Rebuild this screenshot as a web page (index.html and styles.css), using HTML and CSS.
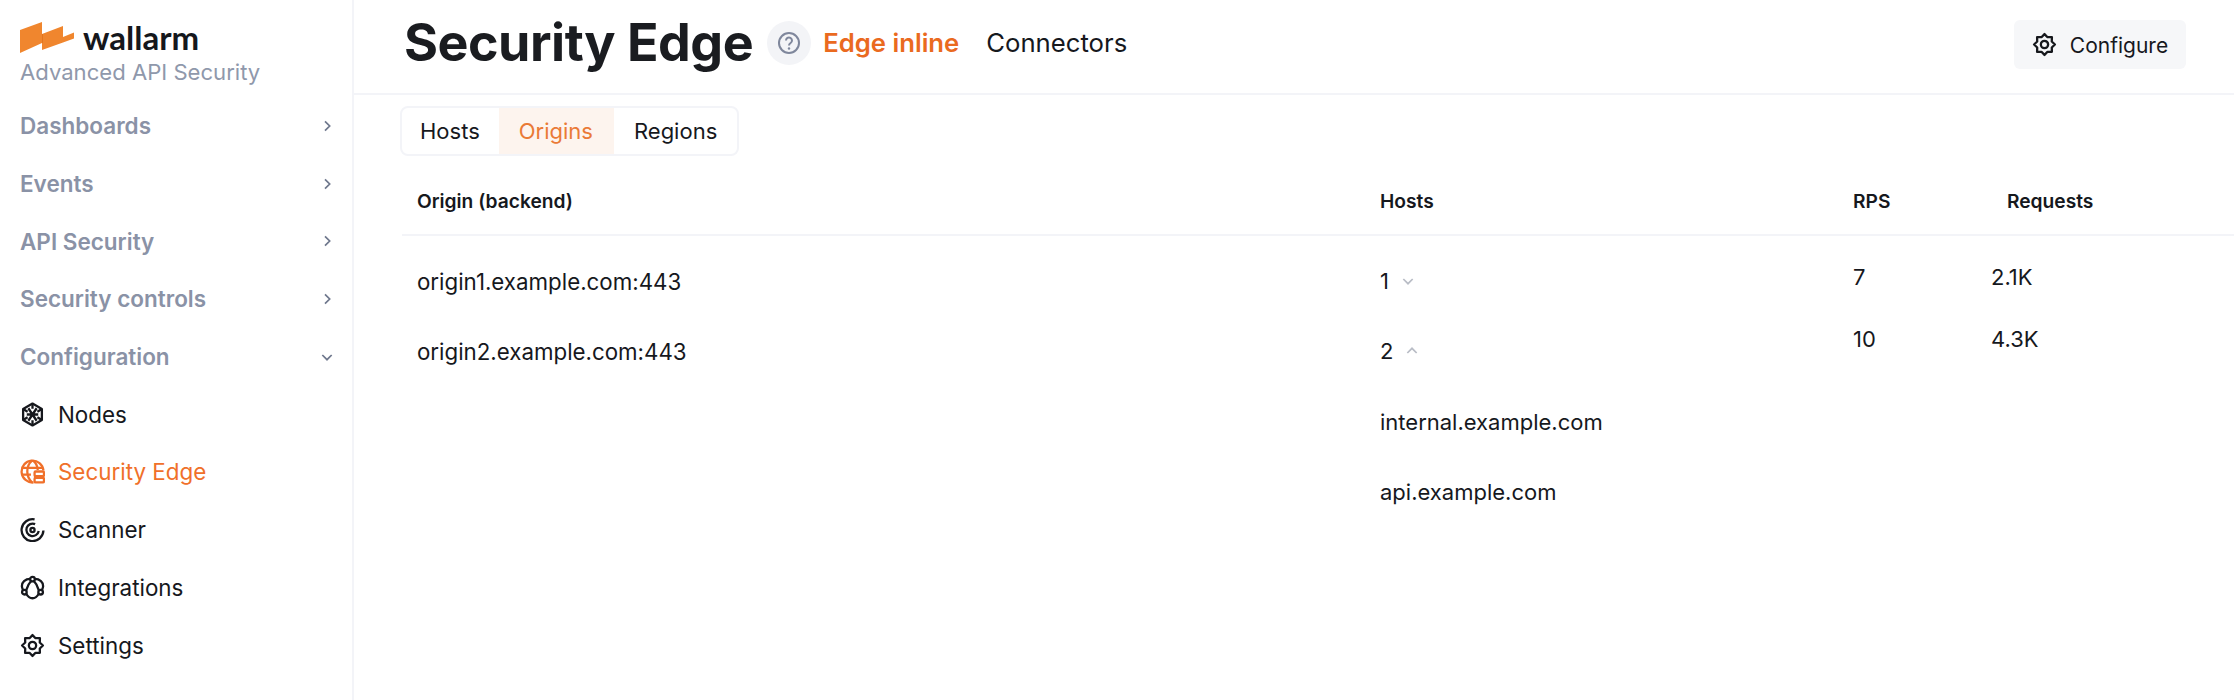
FILE: index.html
```html
<!DOCTYPE html>
<html lang="en">
<head>
<title>Security Edge</title>
<link rel="stylesheet" href="styles.css">
</head>
<body>

<aside class="sidebar">
  <div class="logo">
    <svg class="logo-mark" width="56" height="32" viewBox="0 0 56 32">
      <polygon fill="#f0862e" points="0,9 22,1 22,13 43,5 43,16 54,11.500 54,17.500 43,21.500 22,29 22,22 0,32"/>
      <polygon fill="#e2761f" points="22,13 22,22 23,22 23,13"/>
    </svg>
    <span class="logo-name">wallarm</span>
  </div>
  <div class="logo-sub">Advanced API Security</div>

  <nav class="nav">
    <div class="nav-group">Dashboards
      <svg class="nav-chevron" viewBox="0 0 12 12"><path d="M4.500 2.500 8 6l-3.500 3.500"/></svg>
    </div>
    <div class="nav-group">Events
      <svg class="nav-chevron" viewBox="0 0 12 12"><path d="M4.500 2.500 8 6l-3.500 3.500"/></svg>
    </div>
    <div class="nav-group">API Security
      <svg class="nav-chevron" viewBox="0 0 12 12"><path d="M4.500 2.500 8 6l-3.500 3.500"/></svg>
    </div>
    <div class="nav-group">Security controls
      <svg class="nav-chevron" viewBox="0 0 12 12"><path d="M4.500 2.500 8 6l-3.500 3.500"/></svg>
    </div>
    <div class="nav-group">Configuration
      <svg class="nav-chevron" viewBox="0 0 12 12"><path d="M2.500 4.500 6 8l3.500-3.500"/></svg>
    </div>

    <div class="nav-item">
      <svg class="nav-icon" viewBox="0 0 24 24">
        <path d="M12 1.500 21 6.700v10.600l-9 5.200-9-5.200V6.700z"/>
        <path d="M12 6.500V1.500M12 17.500v5M7.300 9.300 3 6.700M16.700 9.300 21 6.700M7.300 14.700 3 17.300M16.700 14.700 21 17.300"/>
        <path d="M12 12 8 6M12 12l4-6M12 12H6.500M12 12h5.500M12 12l-4 6M12 12l4 6"/>
      </svg>
      Nodes
    </div>
    <div class="nav-item active">
      <svg class="nav-icon" viewBox="0 0 24 24">
        <path d="M13 22.500A10.500 10.500 0 1 1 22.500 11"/>
        <path d="M1.500 8.500h20M1.500 15h9M11.500 1.500C8 4.500 7 8 7 12c0 4 1.500 7.500 4.500 10.500M12.500 1.500c3 2.500 4.500 5.500 4.500 9"/>
        <rect x="14" y="12" width="9" height="4.500" rx="1"/>
        <rect x="14" y="18" width="9" height="4.500" rx="1"/>
      </svg>
      Security Edge
    </div>
    <div class="nav-item">
      <svg class="nav-icon" viewBox="0 0 24 24">
        <path d="M14 2.300A10.500 10.500 0 1 0 22.500 13"/>
        <path d="M14.500 6.800A6 6 0 1 0 18 13.500"/>
        <circle cx="12" cy="12.500" r="2"/>
      </svg>
      Scanner
    </div>
    <div class="nav-item">
      <svg class="nav-icon" viewBox="0 0 24 24">
        <circle cx="12" cy="4" r="2.200"/>
        <circle cx="4.200" cy="16.500" r="2.200"/>
        <circle cx="19.800" cy="16.500" r="2.200"/>
        <path d="M9.800 3.800C5 3.800 1.500 7 1.800 10.800c.1 1 .4 2 1 3.300M14.200 3.800C19 3.800 22.500 7 22.200 10.800c-.1 1-.4 2-1 3.300M6 18c1.500 2.800 3.700 4.300 6 4.300s4.500-1.500 6-4.300"/>
        <path d="M10.700 5.800C8.500 8 7 11 6 14.500M13.300 5.800C15.500 8 17 11 18 14.500"/>
      </svg>
      Integrations
    </div>
    <div class="nav-item">
      <svg class="nav-icon" viewBox="0 0 24 24">
        <polygon points="22,12 19,14.900 19.100,19.100 14.900,19 12,22 9.100,19 4.900,19.100 5,14.900 2,12 5,9.100 4.900,4.900 9.100,5 12,2 14.900,5 19.100,4.900 19,9.100"/>
        <circle cx="12" cy="12" r="3.500"/>
      </svg>
      Settings
    </div>
  </nav>
</aside>

<main class="main">
  <header class="topbar">
    <h1 class="title">Security Edge</h1>
    <button class="help-btn">
      <svg width="24" height="24" viewBox="0 0 24 24">
        <circle cx="12" cy="12" r="10" fill="none" stroke="#7f879c" stroke-width="2"/>
        <path d="M9 9.500a3 3 0 1 1 4.600 2.500c-1 .7-1.600 1.200-1.600 2.500" fill="none" stroke="#7f879c" stroke-width="2"/>
        <circle cx="12" cy="17.500" r="1.200" fill="#7f879c"/>
      </svg>
    </button>
    <a class="top-link active">Edge inline</a>
    <a class="top-link">Connectors</a>
    <button class="config-btn">
      <svg class="nav-icon" viewBox="0 0 24 24">
        <polygon points="22,12 19,14.900 19.100,19.100 14.900,19 12,22 9.100,19 4.900,19.100 5,14.900 2,12 5,9.100 4.900,4.900 9.100,5 12,2 14.900,5 19.100,4.900 19,9.100"/>
        <circle cx="12" cy="12" r="3.500"/>
      </svg>
      <span class="config-label">Configure</span>
    </button>
  </header>

  <div class="tabs">
    <div class="tab">Hosts</div>
    <div class="tab active">Origins</div>
    <div class="tab">Regions</div>
  </div>

  <div class="table-head">
    <div class="th">Origin (backend)</div>
    <div class="th">Hosts</div>
    <div class="th">RPS</div>
    <div class="th th-requests">Requests</div>
  </div>

  <div class="table-body">
    <div class="col col-origin">
      <div class="cell">origin1.example.com:443</div>
      <div class="cell">origin2.example.com:443</div>
    </div>
    <div class="col">
      <div class="cell">1
        <svg class="row-chevron" viewBox="0 0 12 12"><path d="M2.500 4.500 6 8l3.500-3.500"/></svg>
      </div>
      <div class="cell">2
        <svg class="row-chevron" viewBox="0 0 12 12"><path d="M2.500 7.500 6 4l3.500 3.500"/></svg>
      </div>
      <div class="cell">internal.example.com</div>
      <div class="cell">api.example.com</div>
    </div>
    <div class="col">
      <div class="cell-num">7</div>
      <div class="cell-num">10</div>
    </div>
    <div class="col">
      <div class="cell-num">2.1K</div>
      <div class="cell-num">4.3K</div>
    </div>
  </div>
</main>

</body>
</html>
```

FILE: styles.css
```css
* {
  box-sizing: border-box;
}
body {
  margin: 0;
  height: 700px;
  overflow: hidden;
  display: flex;
  background-color: #ffffff;
  color: #16181d;
  font-family: Inter, "Liberation Sans", sans-serif;
  font-size: 22px;
}

/* sidebar */
.sidebar {
  width: 354px;
  flex-shrink: 0;
  padding: 21px 0 0 20px;
  border-right: 2px solid #f3f4f8;
}
.logo {
  display: flex;
  align-items: center;
  gap: 7px;
  height: 32px;
}
.logo-name {
  font-family: Lato, Inter, sans-serif;
  font-size: 33px;
  font-weight: 700;
  color: #15171c;
  line-height: 32px;
}
.logo-sub {
  margin-top: 3px;
  font-size: 22.100px;
  line-height: 32px;
  color: #8f98ab;
}
.nav {
  margin-top: 9px;
}
.nav-group,
.nav-item {
  height: 57.700px;
  display: flex;
  align-items: center;
}
.nav-group {
  justify-content: space-between;
  padding-right: 17px;
  font-size: 22.500px;
  font-weight: 600;
  color: #8a92a6;
}
.nav-chevron {
  width: 16px;
  height: 16px;
  fill: none;
  stroke: #6f788d;
  stroke-width: 1.300;
}
.nav-item {
  gap: 13px;
  font-size: 22.400px;
}
.nav-item.active {
  color: #f0702a;
}
.nav-icon {
  width: 25px;
  height: 25px;
  flex-shrink: 0;
  fill: none;
  stroke: currentColor;
  stroke-width: 2.200;
  stroke-linejoin: round;
}

/* header */
.main {
  flex: 1;
  min-width: 0;
}
.topbar {
  height: 95px;
  display: flex;
  align-items: center;
  padding: 0 48px 8px 50px;
  border-bottom: 2px solid #f3f4f8;
}
.title {
  margin: 0;
  font-size: 52px;
  font-weight: 700;
  color: #1a1c20;
  letter-spacing: -0.5px;
}
.help-btn {
  width: 44px;
  height: 44px;
  margin-left: 14px;
  display: flex;
  align-items: center;
  justify-content: center;
  padding: 0;
  border: none;
  border-radius: 50%;
  background-color: #f3f4f7;
}
.top-link {
  font-size: 25.700px;
  margin-right: 27px;
}
.help-btn + .top-link {
  margin-left: 12px;
}
.top-link.active {
  font-weight: 600;
  color: #ea6a1f;
}
.config-btn {
  margin: 3px 0 0 auto;
  height: 49px;
  width: 172px;
  display: flex;
  align-items: center;
  justify-content: center;
  gap: 13px;
  border: none;
  border-radius: 6px;
  background-color: #f6f7f9;
  color: #16181d;
  font-family: inherit;
  font-size: 21px;
}
.config-label {
  padding-top: 2px;
}

/* tabs */
.tabs {
  display: inline-flex;
  height: 50px;
  margin: 11px 0 0 46px;
  border: 2px solid #f3f4f8;
  border-radius: 8px;
  overflow: hidden;
}
.tab {
  display: flex;
  align-items: center;
  padding: 0 19px;
  font-size: 22px;
}
.tab:first-child {
  padding-left: 18px;
}
.tab:last-child {
  padding: 0 20px;
}
.tab.active {
  padding: 0 21px 0 20px;
  background-color: #fdf4ee;
  color: #ea7a36;
}

/* table */
.table-head,
.table-body {
  display: grid;
  grid-template-columns: 963px 473px 138px 1fr;
  margin-left: 48px;
}
.table-head {
  height: 80px;
  padding-top: 12px;
  align-items: center;
  border-bottom: 2px solid #f3f4f8;
}
.th {
  padding-left: 15px;
  font-size: 19.200px;
  font-weight: 600;
  color: #16181d;
}
.th-requests {
  padding-left: 31px;
}
.table-body {
  padding-top: 10px;
}
.cell {
  height: 70.300px;
  padding-left: 15px;
  display: flex;
  align-items: center;
  gap: 11px;
}
.col-origin .cell {
  font-size: 22.300px;
}
.cell-num {
  height: 62px;
  padding-left: 15px;
  display: flex;
  align-items: center;
}
.row-chevron {
  width: 16px;
  height: 16px;
  fill: none;
  stroke: #b9bdc6;
  stroke-width: 1.300;
}
```
